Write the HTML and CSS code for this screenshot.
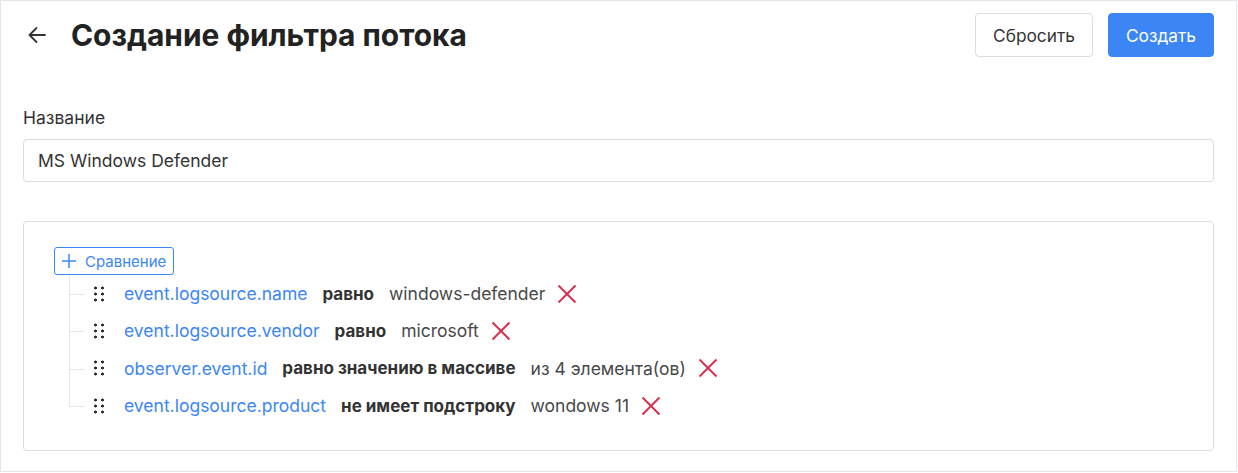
FILE: index.html
```html
<!DOCTYPE html>
<html lang="ru">
<head>
    <meta charset="UTF-8">
    <meta name="viewport" content="width=device-width, initial-scale=1.0">
    <title>Создание фильтра потока</title>
    <link rel="stylesheet" href="styles.css">
</head>
<body>
    <div class="page">
        <header class="header">
            <button class="back" type="button" aria-label="Назад">
                <svg width="20" height="20" viewBox="0 0 20 20" fill="none" stroke="#333" stroke-width="1.8" stroke-linecap="round" stroke-linejoin="round">
                    <path d="M18 10H2.5M9.5 3L2.5 10l7 7"/>
                </svg>
            </button>
            <h1 class="title">Создание фильтра потока</h1>
            <div class="actions">
                <button class="btn btn-reset" type="button">Сбросить</button>
                <button class="btn btn-create" type="button">Создать</button>
            </div>
        </header>

        <label class="label" for="name">Название</label>
        <input class="input" id="name" type="text" value="MS Windows Defender">

        <div class="rules">
            <button class="add-btn" type="button">
                <svg width="14" height="14" viewBox="0 0 14 14" stroke="#3b86f4" stroke-width="1.5">
                    <path d="M7 0v14M0 7h14"/>
                </svg>
                Сравнение
            </button>
            <ul class="tree">
                <li class="rule">
                    <span class="handle"></span>
                    <span class="field">event.logsource.name</span>
                    <span class="op">равно</span>
                    <span class="value">windows-defender</span>
                    <span class="remove"></span>
                </li>
                <li class="rule">
                    <span class="handle"></span>
                    <span class="field">event.logsource.vendor</span>
                    <span class="op">равно</span>
                    <span class="value">microsoft</span>
                    <span class="remove"></span>
                </li>
                <li class="rule">
                    <span class="handle"></span>
                    <span class="field">observer.event.id</span>
                    <span class="op">равно значению в массиве</span>
                    <span class="value">из 4 элемента(ов)</span>
                    <span class="remove"></span>
                </li>
                <li class="rule">
                    <span class="handle"></span>
                    <span class="field">event.logsource.product</span>
                    <span class="op">не имеет подстроку</span>
                    <span class="value">wondows 11</span>
                    <span class="remove"></span>
                </li>
            </ul>
        </div>
    </div>
</body>
</html>
```

FILE: styles.css
```css
* {
    box-sizing: border-box;
}
body {
    margin: 0;
    font-family: Inter, "Noto Sans", sans-serif;
    color: #333;
    background: #fff;
}
.page {
    width: 1237px;
    height: 472px;
    border: 1px solid #e3e3e8;
    padding: 12px 22px 0 22px;
}
.header {
    display: flex;
    align-items: center;
    height: 44px;
}
.back {
    border: 0;
    background: none;
    padding: 0;
    margin-left: 4px;
    width: 20px;
    height: 20px;
    cursor: pointer;
}
.back svg {
    display: block;
}
.title {
    margin: 0 0 0 24px;
    font-size: 29.9px;
    font-weight: 700;
    color: #222;
}
.actions {
    margin-left: auto;
    display: flex;
    gap: 15px;
}
.btn {
    height: 44px;
    padding: 0 17px;
    border-radius: 4px;
    font-family: inherit;
    font-size: 17.3px;
    cursor: pointer;
}
.btn-reset {
    background: #fff;
    border: 1px solid #dcdce2;
    color: #333;
}
.btn-create {
    background: #3b86f4;
    border: 1px solid #3b86f4;
    color: #fff;
}
.label {
    display: block;
    margin-top: 51px;
    font-size: 17.5px;
    line-height: 20px;
    color: #333;
}
.input {
    display: block;
    width: 100%;
    height: 43px;
    margin-top: 11px;
    padding: 0 14px;
    border: 1px solid #dcdce2;
    border-radius: 4px;
    font-family: inherit;
    font-size: 17.5px;
    color: #333;
}
.rules {
    margin-top: 39px;
    height: 230px;
    border: 1px solid #dcdce2;
    border-radius: 4px;
    padding: 25px 30px 0;
}
.add-btn {
    display: flex;
    align-items: center;
    gap: 9px;
    height: 28px;
    padding: 0 7px;
    border: 1px solid #3b86f4;
    border-radius: 3px;
    background: #fff;
    color: #3b86f4;
    font-family: inherit;
    font-size: 15px;
    cursor: pointer;
}
.tree {
    list-style: none;
    margin: 0 0 0 15px;
    padding: 0;
}
.rule {
    position: relative;
    display: flex;
    align-items: center;
    height: 37.3px;
    padding-left: 25px;
    font-size: 17.5px;
}
.rule::before {
    content: "";
    position: absolute;
    left: 0;
    top: 0;
    width: 14px;
    height: 19px;
    border-left: 1px solid #e6e6ec;
    border-bottom: 1px solid #e6e6ec;
}
.rule:not(:last-child)::after {
    content: "";
    position: absolute;
    left: 0;
    top: 19px;
    bottom: 0;
    border-left: 1px solid #e6e6ec;
}
.handle {
    width: 10px;
    height: 16px;
    margin-right: 20px;
    background-image: radial-gradient(circle, #333 1.4px, transparent 1.6px);
    background-size: 7px 6px;
    background-position: -2px -1px;
}
.field {
    color: #3b86f4;
}
.op {
    margin-left: 15px;
    font-size: 17px;
    font-weight: 700;
    color: #333;
}
.value {
    margin-left: 15px;
    color: #484848;
}
.remove {
    position: relative;
    width: 20px;
    height: 20px;
    margin-left: 12px;
}
.remove::before,
.remove::after {
    content: "";
    position: absolute;
    left: -2px;
    top: 9px;
    width: 24px;
    height: 2px;
    background: #d8304f;
    transform: rotate(45deg);
}
.remove::after {
    transform: rotate(-45deg);
}
```
